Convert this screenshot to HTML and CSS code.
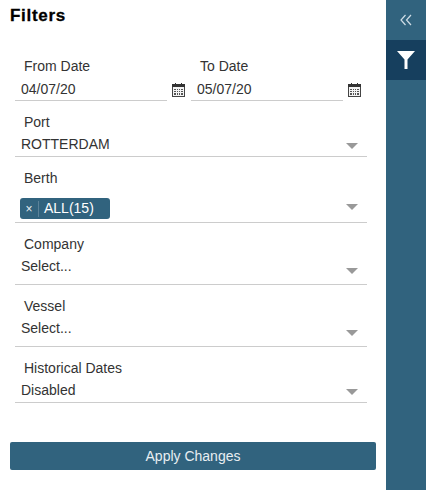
FILE: index.html
```html
<!DOCTYPE html>
<html lang="en">
<head>
<meta charset="utf-8">
<title>Filters</title>
<link rel="stylesheet" href="styles.css">
</head>
<body>
<div class="app">
  <main class="panel">
    <h1 class="title">Filters</h1>
    <div class="fields">
      <div class="date-row">
        <div class="date-field">
          <label class="label date-label">From Date</label>
          <div class="date-line">
            <div class="control"><span class="value">04/07/20</span></div>
            <svg class="cal" viewBox="0 0 13 14" aria-hidden="true"><rect x="0.5" y="1.5" width="12" height="12" fill="#f4f4f4" stroke="#444"/><rect x="0" y="1" width="13" height="3" fill="#333"/><rect x="3" y="0" width="1" height="2" fill="#333"/><rect x="9" y="0" width="1" height="2" fill="#333"/><path d="M2 6h2v1H2zM5 6h1v1H5zM7 6h1v1H7zM9 6h2v1H9zM2 8h2v1H2zM5 8h1v1H5zM7 8h1v1H7zM9 8h2v1H9zM2 10h2v2H2zM5 10h1v2H5zM7 10h1v2H7zM9 10h2v2H9z" fill="#555"/></svg>
          </div>
        </div>
        <div class="date-field">
          <label class="label date-label">To Date</label>
          <div class="date-line">
            <div class="control"><span class="value">05/07/20</span></div>
            <svg class="cal" viewBox="0 0 13 14" aria-hidden="true"><rect x="0.5" y="1.5" width="12" height="12" fill="#f4f4f4" stroke="#444"/><rect x="0" y="1" width="13" height="3" fill="#333"/><rect x="3" y="0" width="1" height="2" fill="#333"/><rect x="9" y="0" width="1" height="2" fill="#333"/><path d="M2 6h2v1H2zM5 6h1v1H5zM7 6h1v1H7zM9 6h2v1H9zM2 8h2v1H2zM5 8h1v1H5zM7 8h1v1H7zM9 8h2v1H9zM2 10h2v2H2zM5 10h1v2H5zM7 10h1v2H7zM9 10h2v2H9z" fill="#555"/></svg>
          </div>
        </div>
      </div>
      <div class="field">
        <label class="label">Port</label>
        <div class="control select"><span class="value">ROTTERDAM</span><i class="caret"></i></div>
      </div>
      <div class="field">
        <label class="label">Berth</label>
        <div class="control select tall">
          <span class="tag"><span class="tag-x">×</span><span class="tag-text">ALL(15)</span></span>
          <i class="caret"></i>
        </div>
      </div>
      <div class="field">
        <label class="label">Company</label>
        <div class="control select roomy"><span class="value">Select...</span><i class="caret low"></i></div>
      </div>
      <div class="field">
        <label class="label">Vessel</label>
        <div class="control select roomy"><span class="value">Select...</span><i class="caret low"></i></div>
      </div>
      <div class="field">
        <label class="label">Historical Dates</label>
        <div class="control select"><span class="value">Disabled</span><i class="caret"></i></div>
      </div>
    </div>
    <button class="apply" type="button">Apply Changes</button>
  </main>
  <aside class="rail">
    <div class="rail-btn">
      <svg class="chev" viewBox="0 0 12 12" aria-hidden="true"><path d="M5.500 1 1 6l4.500 5M11 1 6.500 6l4.500 5" fill="none" stroke="#cfdde6" stroke-width="1.2"/></svg>
    </div>
    <div class="rail-btn active">
      <svg class="funnel" viewBox="0 0 20 20" aria-hidden="true"><path d="M1 1h18l-7.500 8.600V19H8.500V9.600z" fill="#fff"/></svg>
    </div>
  </aside>
</div>
</body>
</html>
```

FILE: styles.css
```css
* { box-sizing: border-box; }
html, body { margin: 0; padding: 0; background: #fff; }
body {
  font-family: "Liberation Sans", Arial, sans-serif;
  font-size: 14px;
  color: #333;
}
.app { display: flex; width: 426px; height: 490px; overflow: hidden; }
.panel { width: 386px; padding: 5px 10px 0; }
.title {
  margin: 0;
  font-size: 17px;
  line-height: 22px;
  font-weight: 700;
  color: #000;
  -webkit-text-stroke: 0.3px #000;
  letter-spacing: 0.7px;
}
.fields { padding: 28px 0 0 5px; width: 357px; }
.date-row { display: flex; gap: 24px; }
.date-field { width: 152px; }
.date-line { position: relative; }
.cal { position: absolute; left: 157px; top: 5px; width: 13px; height: 14px; }
.label { display: block; height: 22px; line-height: 22px; padding-left: 9px; }
.date-label { height: 23px; }
.control { border-bottom: 1px solid #ccc; padding: 1px 0 0 6px; position: relative; height: 23px; line-height: 20px; }
.value { display: block; color: #333; }
.field { padding-top: 10px; }
.select { width: 352px; height: 24px; }
.tall { height: 34px; padding: 9px 0 0 5px; }
.roomy { height: 30px; }
.caret {
  position: absolute;
  right: 9px;
  top: 10px;
  width: 0;
  height: 0;
  border-left: 6px solid transparent;
  border-right: 6px solid transparent;
  border-top: 6px solid #999;
}
.tall .caret { top: 15px; }
.caret.low { top: 13px; }
.tag {
  display: flex;
  align-items: center;
  width: 90px;
  height: 21px;
  background: #31637e;
  color: #fff;
  border-radius: 3px;
  line-height: 21px;
}
.tag-x {
  width: 19px;
  height: 16px;
  line-height: 16px;
  text-align: center;
  font-size: 12px;
  border-right: 1px solid #5b8299;
  color: #e6edf1;
}
.tag-text { padding-left: 5px; }
.apply {
  display: block;
  width: 366px;
  height: 28px;
  margin-top: 39px;
  padding: 0;
  border: 0;
  border-radius: 2px;
  background: #31637e;
  color: #e8eef2;
  font: 14px/28px "Liberation Sans", Arial, sans-serif;
}
.rail { width: 40px; height: 490px; background: #31637e; }
.rail-btn { height: 40px; display: flex; align-items: center; justify-content: center; }
.rail-btn.active { background: #163f5e; }
.chev { width: 12px; height: 12px; }
.funnel { width: 20px; height: 20px; }
```
